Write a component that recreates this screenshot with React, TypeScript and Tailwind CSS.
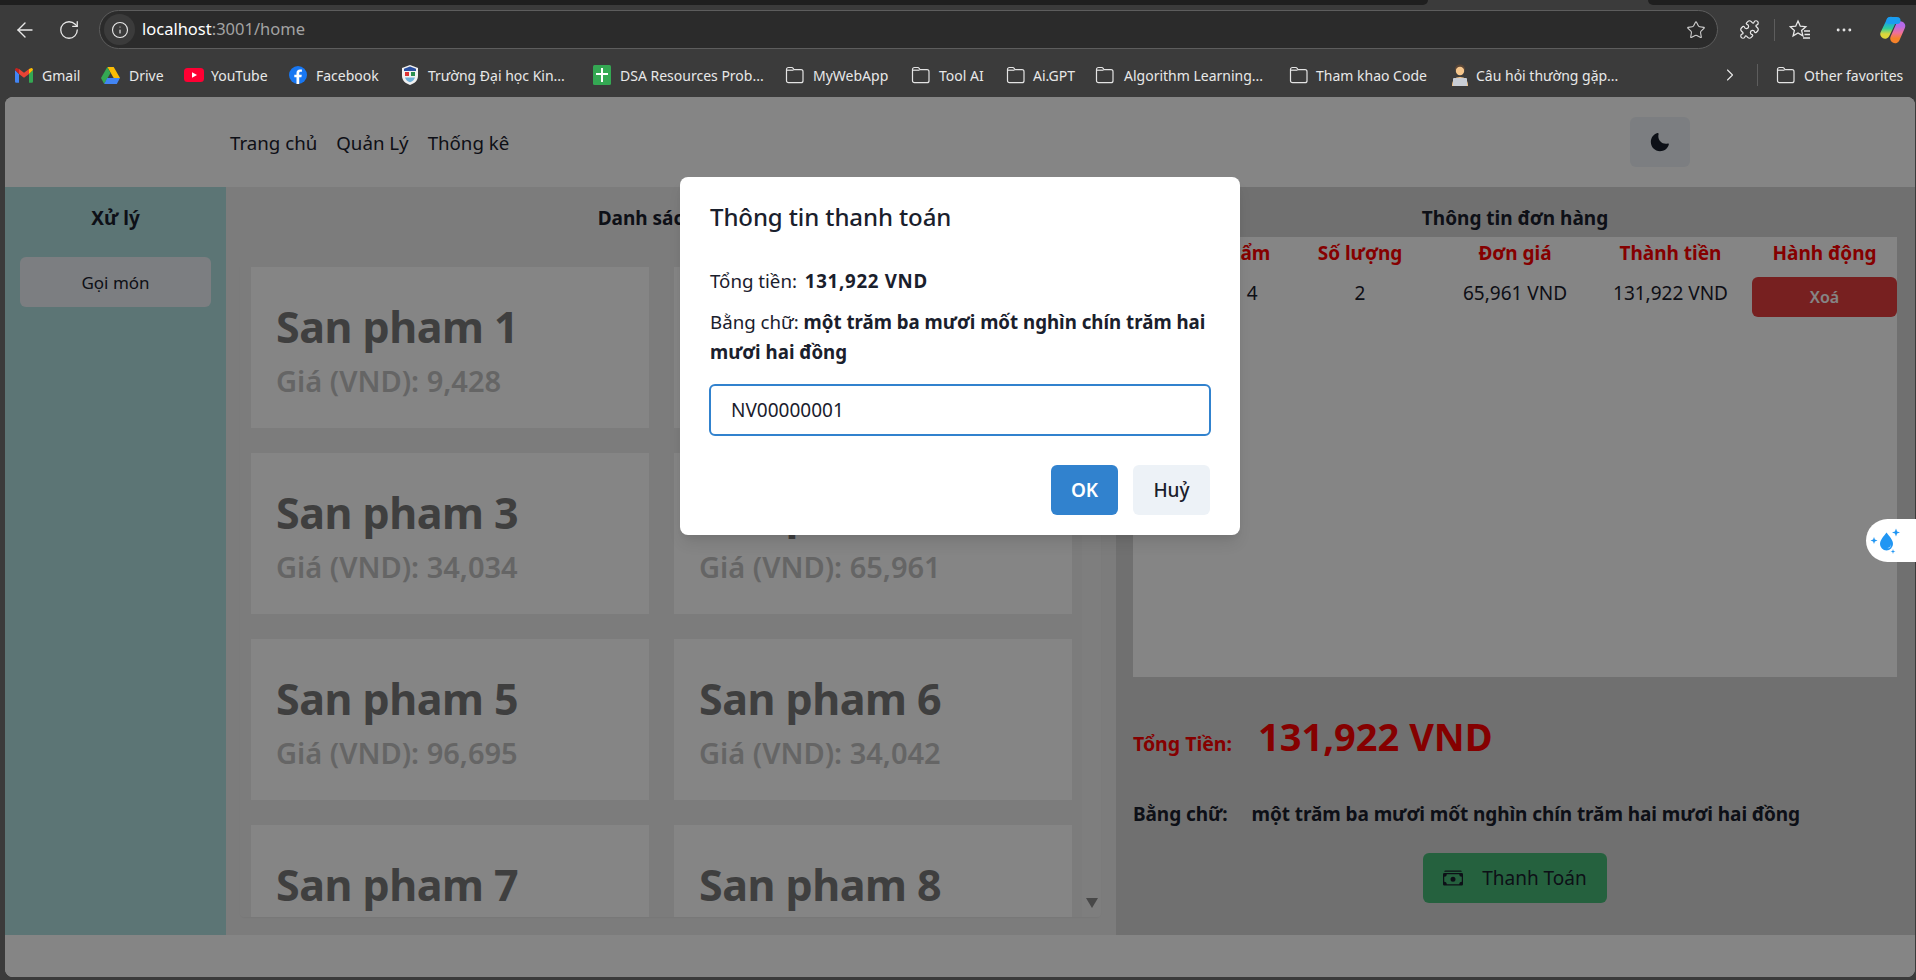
import { ArrowLeft, ChevronRight, Ellipsis, Info, Puzzle, RotateCw, Star } from 'lucide-react';
import { BsCashStack } from 'react-icons/bs';
import type { ReactNode } from 'react';

const FolderIcon = () => (
  <svg width="19" height="18" viewBox="0 0 19 18" fill="none" stroke="#e4e4e4" strokeWidth="1.2">
    <path d="M1.5 3.5c0-1.2.8-2 2-2h3.2c.8 0 1.2.4 1.6 1l.7 1.2h7c1.2 0 2 .8 2 2v9c0 1.2-.8 2-2 2h-12.500c-1.200 0-2-.8-2-2z" />
    <path d="M1.500 4.200h7" />
  </svg>
);

const GmailIcon = () => (
  <svg width="18" height="15" viewBox="0 0 18 15">
    <path d="M0 2v11.500c0 .8.600 1.300 1.300 1.300H4V6z" fill="#4285f4" />
    <path d="M14 6v8.800h2.700c.7 0 1.300-.5 1.300-1.300V2z" fill="#34a853" />
    <path d="M4 6 9 9.700 14 6V1l-5 3.700L4 1z" fill="#ea4335" />
    <path d="M0 2l4 4V1L2.200.2C1.200-.3 0 .6 0 2z" fill="#c5221f" />
    <path d="M14 1v5l4-4c0-1.400-1.200-2.300-2.200-1.800z" fill="#fbbc04" />
  </svg>
);

const DriveIcon = () => (
  <svg width="19" height="17" viewBox="0 0 19 17">
    <path d="M6.300 0h6.400l6.300 11h-6.300z" fill="#fbbc04" />
    <path d="M6.300 0 0 11l3.200 6 6.300-11z" fill="#34a853" />
    <path d="M3.200 17h12.600l3.200-6H6.300z" fill="#4285f4" />
  </svg>
);

const YoutubeIcon = () => (
  <svg width="20" height="14" viewBox="0 0 20 14">
    <rect width="20" height="14" rx="3.500" fill="#ff0033" />
    <path d="M8 4.200 13 7l-5 2.800z" fill="#fff" />
  </svg>
);

const FacebookIcon = () => (
  <svg width="18" height="18" viewBox="0 0 18 18">
    <circle cx="9" cy="9" r="9" fill="#1877f2" />
    <path d="M10.200 18v-6.700h2.200l.4-2.600h-2.600V7.200c0-.8.400-1.400 1.500-1.400h1.200V3.600c-.6-.1-1.300-.2-2-.2-2.100 0-3.400 1.300-3.400 3.500v1.800H5.300v2.600h2.200V18z" fill="#fff" />
  </svg>
);

const ShieldIcon = () => (
  <svg width="16" height="20" viewBox="0 0 16 20">
    <path d="M8 0 16 3v8c0 4.500-3.500 7.500-8 9-4.500-1.500-8-4.500-8-9V3z" fill="#f1f1f1" />
    <path d="M8 1.500 14 3.800V6H2V3.800z" fill="#2a4fa0" />
    <rect x="3" y="7" width="4" height="4" fill="#d33" />
    <rect x="9" y="7" width="4" height="4" fill="#2a8f4f" />
    <path d="M3 12.500h10c-.7 2.300-2.500 3.800-5 4.800-2.500-1-4.300-2.500-5-4.800z" fill="#6fb1d8" />
  </svg>
);

const SheetIcon = () => (
  <svg width="18" height="20" viewBox="0 0 18 20">
    <rect width="18" height="20" rx="1.500" fill="#34a853" />
    <path d="M8 3h2v5h5v2h-5v7H8v-7H3V8h5z" fill="#fff" />
  </svg>
);

const PersonIcon = () => (
  <svg width="20" height="22" viewBox="0 0 20 22">
    <path d="M5 5c0-3 2.200-4.500 5-4.500S15 2 15 5v1H5z" fill="#5b4636" />
    <circle cx="10" cy="7" r="4.200" fill="#f5c68c" />
    <path d="M2 22c0-6 3-9 8-9s8 3 8 9z" fill="#f5c68c" />
    <rect x="3" y="14" width="14" height="8" rx="1" fill="#c9ced6" />
  </svg>
);

const CopilotIcon = () => (
  <svg width="28" height="28" viewBox="0 0 28 28" fill="none" strokeLinecap="round">
    <defs>
      <linearGradient id="cp1" x1="0" y1="0" x2="0" y2="1">
        <stop offset="0" stopColor="#1a9cf0" />
        <stop offset="0.55" stopColor="#2fcf9a" />
        <stop offset="1" stopColor="#dcd63a" />
      </linearGradient>
      <linearGradient id="cp2" x1="0" y1="0" x2="0" y2="1">
        <stop offset="0" stopColor="#b56ae8" />
        <stop offset="0.55" stopColor="#f0709a" />
        <stop offset="1" stopColor="#f5822a" />
      </linearGradient>
    </defs>
    <path d="M21.500 10 16 22.500" stroke="url(#cp2)" strokeWidth="9.500" />
    <path d="M12 5.500 6 18" stroke="url(#cp1)" strokeWidth="9.500" />
    <path d="M11 4.500h7" stroke="#1a9cf0" strokeWidth="7" />
  </svg>
);

const WaterDropIcon = () => (
  <svg width="34" height="28" viewBox="0 0 34 28" fill="#2196f3">
    <path d="M16.500 5.500c3 4 6.500 7.500 6.500 11.500a6.500 6.500 0 0 1-13 0c0-4 3.500-7.500 6.500-11.500z" />
    <path d="M17.500 21a4 4 0 0 0 3.500-4c.5 3-1.200 4.800-3.500 4z" fill="#bde0fb" />
    <path d="M26 1.500l1.100 2.900 2.900 1.100-2.900 1.100-1.100 2.900-1.100-2.900-2.900-1.100 2.900-1.100z" />
    <path d="M4 10l.9 2.600 2.600.9-2.600.9L4 17l-.9-2.600-2.600-.9 2.600-.9z" />
    <path d="M23 22l.6 1.900 1.900.6-1.900.6-.6 1.900-.6-1.900-1.900-.6 1.900-.6z" />
  </svg>
);

const bookmarks: { label: string; width: string; spacing: string; icon: ReactNode }[] = [
  { label: 'Gmail', width: 'w-[38px]', spacing: 'gap-[9px] mr-[21px]', icon: <GmailIcon /> },
  { label: 'Drive', width: 'w-[34px]', spacing: 'gap-[9px] mr-[21px]', icon: <DriveIcon /> },
  { label: 'YouTube', width: 'w-[57px]', spacing: 'gap-[7px] mr-[21px]', icon: <YoutubeIcon /> },
  { label: 'Facebook', width: 'w-[64px]', spacing: 'gap-[9px] mr-[22px]', icon: <FacebookIcon /> },
  { label: 'Trường Đại học Kin...', width: 'w-[138px]', spacing: 'gap-[10px] mr-[27px]', icon: <ShieldIcon /> },
  { label: 'DSA Resources Prob...', width: 'w-[145px]', spacing: 'gap-[9px] mr-[20px]', icon: <SheetIcon /> },
  { label: 'MyWebApp', width: 'w-[78px]', spacing: 'gap-[9px] mr-[20px]', icon: <FolderIcon /> },
  { label: 'Tool AI', width: 'w-[46px]', spacing: 'gap-[9px] mr-[21px]', icon: <FolderIcon /> },
  { label: 'Ai.GPT', width: 'w-[43px]', spacing: 'gap-[8px] mr-[19px]', icon: <FolderIcon /> },
  { label: 'Algorithm Learning...', width: 'w-[138px]', spacing: 'gap-[10px] mr-[27px]', icon: <FolderIcon /> },
  { label: 'Tham khao Code', width: 'w-[112px]', spacing: 'gap-[8px] mr-[22px]', icon: <FolderIcon /> },
  { label: 'Câu hỏi thường gặp...', width: 'w-[144px]', spacing: 'gap-[6px] mr-0', icon: <PersonIcon /> },
];

const products = [
  { name: 'San pham 1', price: '9,428' },
  { name: 'San pham 2', price: '52,310' },
  { name: 'San pham 3', price: '34,034' },
  { name: 'San pham 4', price: '65,961' },
  { name: 'San pham 5', price: '96,695' },
  { name: 'San pham 6', price: '34,042' },
  { name: 'San pham 7', price: '18,207' },
  { name: 'San pham 8', price: '71,540' },
];

function BrowserChrome() {
  return (
    <div className="h-[97px] shrink-0 text-[#e8e8e8]">
      <div className="flex h-[5px]">
        <div className="w-[1428px] rounded-br-lg bg-[#1f1f1f]" />
        <div className="flex-1" />
        <div className="w-[268px] rounded-bl-lg bg-[#1f1f1f]" />
      </div>
      <div className="mt-[5px] flex h-[39px] items-center">
        <ArrowLeft className="ml-[13px] h-6 w-6" strokeWidth={1.4} />
        <RotateCw className="ml-[21px] h-[22px] w-[22px]" strokeWidth={1.4} />
        <div className="ml-[19px] flex h-[39px] w-[1619px] items-center rounded-full border border-[#5d5d5d] bg-[#2b2b2b] pr-[11px]">
          <div className="ml-[4px] flex h-[31px] w-[31px] items-center justify-center rounded-full bg-[#3b3b3b]">
            <Info className="h-[18px] w-[18px]" strokeWidth={1.5} />
          </div>
          <span className="ml-[7px] text-[16.5px] text-white">
            localhost<span className="text-[#a3a3a3]">:3001/home</span>
          </span>
          <Star className="ml-auto h-5 w-5 text-[#d0d0d0]" strokeWidth={1.3} />
        </div>
        <Puzzle className="ml-[21px] h-[21px] w-[21px]" strokeWidth={1.4} />
        <div className="ml-[14px] h-[22px] w-px bg-[#5d5d5d]" />
        <svg className="ml-[14px]" width="22" height="22" viewBox="0 0 22 22" fill="none" stroke="currentColor" strokeWidth="1.3">
          <path d="M9 2l2.300 5.200 5.500.5-4.200 3.700 1.300 5.500L9 14l-4.900 2.900 1.300-5.500L1.200 7.700l5.500-.5z" />
          <path d="M15 12h6M15.500 15.500h5.500M14 19h7" />
        </svg>
        <Ellipsis className="ml-[23px] h-5 w-5" strokeWidth={1.5} />
        <div className="ml-[25px]">
          <CopilotIcon />
        </div>
      </div>
      <div className="mt-[10px] flex h-[32px] items-center pl-[15px] text-[14px]">
        {bookmarks.map((item) => (
          <div key={item.label} className={`flex items-center ${item.spacing}`}>
            {item.icon}
            <span className={`${item.width} whitespace-nowrap`}>{item.label}</span>
          </div>
        ))}
        <ChevronRight className="ml-[100px] h-5 w-5" strokeWidth={1.3} />
        <div className="ml-[17px] h-[22px] w-px bg-[#5d5d5d]" />
        <div className="ml-[18px] flex items-center gap-[9px]">
          <FolderIcon />
          <span className="w-[98px] whitespace-nowrap">Other favorites</span>
        </div>
      </div>
    </div>
  );
}

function ProductCard({ name, price }: { name: string; price: string }) {
  return (
    <div className="h-[161px] bg-white pl-[25px] pt-[30px]">
      <div className="text-[43px] font-bold leading-[60px] tracking-[-0.5px] text-[#7a7a7a]">{name}</div>
      <div className="mt-[3px] text-[29px] font-semibold leading-[42px] text-[#c2c2c2]">Giá (VND): {price}</div>
    </div>
  );
}

function PaymentDialog() {
  return (
    <div className="absolute inset-0 flex items-start justify-center bg-black/48 pt-20">
      <div className="w-[560px] rounded-lg bg-white px-[30px] pb-5 pt-[22px] text-[18.7px] leading-[30px] text-[#1a202c] shadow-[0_10px_15px_-3px_rgba(0,0,0,0.1),0_4px_6px_-2px_rgba(0,0,0,0.05)]">
        <h2 className="text-[24px] font-medium leading-9 tracking-[-0.1px]">Thông tin thanh toán</h2>
        <p className="mt-[31px]">
          Tổng tiền: <b className="ml-[3px] tracking-[0.7px]">131,922 VND</b>
        </p>
        <p className="mt-[11px]">
          Bằng chữ: <b>một trăm ba mươi mốt nghìn chín trăm hai mươi hai đồng</b>
        </p>
        <input
          readOnly
          defaultValue="NV00000001"
          className="-ml-px mt-[17px] block h-[52px] w-[502px] rounded-md border-2 border-[#3182ce] bg-white px-5 text-[19px] outline-none"
        />
        <div className="mt-[29px] flex justify-end gap-[15px] text-[19px]">
          <button className="h-[50px] w-[67px] rounded-md bg-[#3182ce] font-semibold text-white">OK</button>
          <button className="h-[50px] w-[77px] rounded-md bg-[#edf2f7] font-medium">Huỷ</button>
        </div>
      </div>
    </div>
  );
}

export default function App() {
  return (
    <div className="relative flex h-[980px] w-[1916px] flex-col overflow-hidden bg-[#3b3b3b] font-['Noto_Sans',sans-serif]">
      <BrowserChrome />

      <div className="relative mr-[1px] ml-[5px] flex h-[880px] flex-col overflow-hidden rounded-lg bg-white text-[19px] leading-[27px] text-[#1a202c]">
        {/* Header */}
        <div className="flex h-[90px] shrink-0 items-center justify-between pl-[225px] pr-[225px]">
          <nav className="flex gap-[19px] text-[18.7px]">
            <span>Trang chủ</span>
            <span>Quản Lý</span>
            <span>Thống kê</span>
          </nav>
          <button className="flex h-[50px] w-[60px] items-center justify-center rounded-md bg-[#edf2f7]">
            <svg width="20" height="20" viewBox="0 0 24 24" fill="currentColor">
              <path d="M21.400 13.700C20.600 13.900 19.800 14 19 14c-5 0-9-4-9-9 0-.8.100-1.600.3-2.400.1-.3 0-.7-.3-1-.3-.3-.6-.4-1-.3C4.300 2.700 1 7.100 1 12c0 6.100 4.900 11 11 11 4.900 0 9.300-3.300 10.600-8.100.1-.3 0-.7-.3-1-.3-.2-.6-.3-.9-.2z" />
            </svg>
          </button>
        </div>

        <div className="flex h-[748px] shrink-0">
          {/* Sidebar */}
          <aside className="w-[221px] shrink-0 bg-[#b1e1e1] px-[15px] pt-[18px]">
            <h3 className="text-center font-bold">Xử lý</h3>
            <button className="mt-[25px] h-[50px] w-full rounded-md bg-[#edf2f7] text-[17px]">Gọi món</button>
          </aside>

          {/* Danh sach san pham */}
          <section className="flex w-[890px] shrink-0 flex-col bg-[#eeeeee] pl-[14px] pr-[15px] pt-[18px]">
            <h3 className="text-center font-bold">Danh sách món</h3>
            <div className="mt-[31px] flex h-[654px] overflow-hidden rounded-sm shadow-[0_1px_2px_rgba(0,0,0,0.04)]">
              <div className="flex-1 pl-[11px] pr-[10px] pt-[4px]">
                <div className="grid grid-cols-2 gap-x-[25px] gap-y-[25px]">
                  {products.map((p) => (
                    <ProductCard key={p.name} name={p.name} price={p.price} />
                  ))}
                </div>
              </div>
              <div className="flex w-[19px] shrink-0 flex-col items-center justify-end bg-[#f1f1f1] pb-[9px]">
                <svg width="12" height="10" viewBox="0 0 12 10" fill="#8a8a8a">
                  <path d="M0 0h12L6 10z" />
                </svg>
              </div>
            </div>
          </section>

          {/* Thong tin don hang */}
          <section className="flex-1 bg-[#d7d7d7] pl-[17px] pr-[18px] pt-[18px]">
            <h3 className="text-center font-bold">Thông tin đơn hàng</h3>
            <div className="mt-[5px] h-[440px] bg-white text-center">
              <div className="grid h-[32px] grid-cols-[150px_154px_156px_155px_149px] items-center font-bold text-[#ff0000]">
                <span className="pr-[6px]">Tên sản phẩm</span>
                <span>Số lượng</span>
                <span>Đơn giá</span>
                <span>Thành tiền</span>
                <span className="pl-1">Hành động</span>
              </div>
              <div className="grid grid-cols-[150px_154px_156px_155px_149px] pt-2">
                <span className="pr-[16px] pt-[3px] [word-spacing:5px]">San pham 4</span>
                <span className="pt-[3px]">2</span>
                <span className="pt-[3px]">65,961 VND</span>
                <span className="pt-[3px]">131,922 VND</span>
                <div className="flex justify-end">
                  <button className="h-10 w-[145px] rounded-md bg-[#e53e3e] text-[16px] font-semibold text-white">Xoá</button>
                </div>
              </div>
            </div>
            <div className="mt-[32px] flex items-baseline gap-[26px]">
              <span className="text-[19.5px] font-bold text-[#ff0000]">Tổng Tiền:</span>
              <span className="text-[38px] font-bold leading-[54px] text-[#ff0000]">131,922 VND</span>
            </div>
            <div className="mt-[38px] flex gap-[24px] font-bold tracking-[-0.08px]">
              <span>Bằng chữ:</span>
              <span>một trăm ba mươi mốt nghìn chín trăm hai mươi hai đồng</span>
            </div>
            <button className="mx-auto mt-[25px] flex h-[50px] w-[184px] items-center justify-center gap-[19px] rounded-md bg-[#48bb78]">
              <BsCashStack className="h-5 w-5" />
              Thanh Toán
            </button>
          </section>
        </div>

        <div className="flex-1" />

        <PaymentDialog />
      </div>

      {/* extension pill */}
      <div className="absolute right-0 top-[519px] flex h-[43px] w-[50px] items-center rounded-l-full bg-white pl-[4px]">
        <WaterDropIcon />
      </div>
    </div>
  );
}
